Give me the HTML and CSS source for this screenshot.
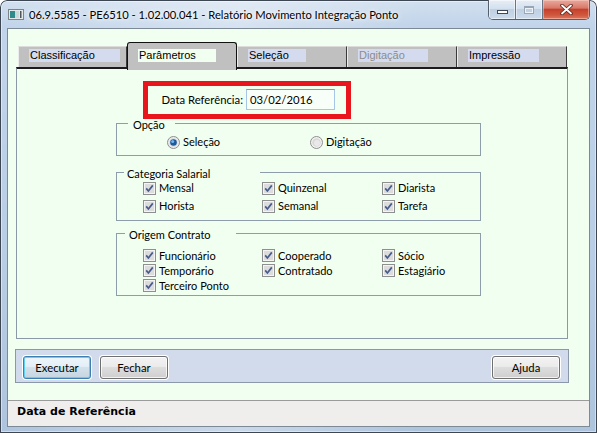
FILE: index.html
```html
<!DOCTYPE html>
<html lang="pt-BR">
<head>
<meta charset="utf-8">
<title>Relatório Movimento Integração Ponto</title>
<link rel="stylesheet" href="styles.css">
</head>
<body>
<div class="window">
  <div class="titlebar">
    <svg class="app-icon" width="16" height="11" viewBox="0 0 16 11"><rect x=".5" y=".5" width="15" height="10" fill="#e4e8ea" stroke="#7c8488"/><rect x="2" y="2" width="5" height="7" fill="#2f8a8c"/><rect x="7" y="2" width="4" height="7" fill="#c9d9da"/><rect x="12" y="2" width="1.5" height="7" fill="#4d5558"/></svg>
    <span class="title">06.9.5585 - PE6510 - 1.02.00.041 - Relatório Movimento Integração Ponto</span>
    <div class="caption">
      <span class="cbtn cbtn-min"><span class="min-glyph"></span></span>
      <span class="cbtn cbtn-max"><span class="max-glyph"></span></span>
      <span class="cbtn cbtn-close"><svg width="13" height="11" viewBox="0 0 13 11"><path d="M2 1.5l9 8M11 1.5l-9 8" stroke="#5a2a22" stroke-width="3.6" stroke-linecap="round"/><path d="M2 1.5l9 8M11 1.5l-9 8" stroke="#fff" stroke-width="1.8" stroke-linecap="round"/></svg></span>
    </div>
  </div>
  <div class="client">
    <div class="tabarea">
      <div class="tabs">
        <div class="tab tab-first"><span class="tab-label w-class">Classificação</span></div>
        <div class="tab tab-active"><span class="tab-label tab-label-active w-param">Parâmetros</span></div>
        <div class="tab"><span class="tab-label w-sel">Seleção</span></div>
        <div class="tab"><span class="tab-label tab-label-disabled w-dig">Digitação</span></div>
        <div class="tab"><span class="tab-label w-imp">Impressão</span></div>
      </div>
      <div class="panel">
        <div class="annot"></div>
        <div class="data-row">
          <span class="data-label">Data Referência:</span>
          <div class="input">03/02/2016</div>
        </div>

        <div class="group g-opcao">
          <div class="group-title t-opcao">Opção</div>
          <div class="radios">
            <span class="opt"><svg class="rd" width="13" height="13" viewBox="0 0 13 13"><circle cx="6.5" cy="6.5" r="6" fill="#ececec" stroke="#8e8f8f"/><circle cx="6.5" cy="6.5" r="4.2" fill="#d8dde2"/><circle cx="6.5" cy="6.5" r="3.3" fill="#1d5a9a"/><circle cx="5.7" cy="5.6" r="1.5" fill="#74b6ec"/></svg><span>Seleção</span></span>
            <span class="opt"><svg class="rd" width="13" height="13" viewBox="0 0 13 13"><circle cx="6.5" cy="6.5" r="6" fill="#f2f2f2" stroke="#8e8f8f"/><circle cx="6.5" cy="6.5" r="4.3" fill="#d9d9d9"/><circle cx="7" cy="7" r="3" fill="#e9e9e9"/></svg><span>Digitação</span></span>
          </div>
        </div>

        <div class="group g-cat">
          <div class="group-title t-cat">Categoria Salarial</div>
          <div class="checks">
            <span class="opt"><svg class="cb" width="13" height="13" viewBox="0 0 13 13"><rect x=".5" y=".5" width="12" height="12" fill="#f4f4f4" stroke="#8e8f8f"/><rect x="2" y="2" width="9" height="9" fill="#dcdcdc"/><path d="M3.2 6.4l2.2 2.6L9.8 3.4" fill="none" stroke="#475c8c" stroke-width="1.7"/></svg><span>Mensal</span></span>
            <span class="opt"><svg class="cb" width="13" height="13" viewBox="0 0 13 13"><rect x=".5" y=".5" width="12" height="12" fill="#f4f4f4" stroke="#8e8f8f"/><rect x="2" y="2" width="9" height="9" fill="#dcdcdc"/><path d="M3.2 6.4l2.2 2.6L9.8 3.4" fill="none" stroke="#475c8c" stroke-width="1.7"/></svg><span>Quinzenal</span></span>
            <span class="opt"><svg class="cb" width="13" height="13" viewBox="0 0 13 13"><rect x=".5" y=".5" width="12" height="12" fill="#f4f4f4" stroke="#8e8f8f"/><rect x="2" y="2" width="9" height="9" fill="#dcdcdc"/><path d="M3.2 6.4l2.2 2.6L9.8 3.4" fill="none" stroke="#475c8c" stroke-width="1.7"/></svg><span>Diarista</span></span>
            <span class="opt"><svg class="cb" width="13" height="13" viewBox="0 0 13 13"><rect x=".5" y=".5" width="12" height="12" fill="#f4f4f4" stroke="#8e8f8f"/><rect x="2" y="2" width="9" height="9" fill="#dcdcdc"/><path d="M3.2 6.4l2.2 2.6L9.8 3.4" fill="none" stroke="#475c8c" stroke-width="1.7"/></svg><span>Horista</span></span>
            <span class="opt"><svg class="cb" width="13" height="13" viewBox="0 0 13 13"><rect x=".5" y=".5" width="12" height="12" fill="#f4f4f4" stroke="#8e8f8f"/><rect x="2" y="2" width="9" height="9" fill="#dcdcdc"/><path d="M3.2 6.4l2.2 2.6L9.8 3.4" fill="none" stroke="#475c8c" stroke-width="1.7"/></svg><span>Semanal</span></span>
            <span class="opt"><svg class="cb" width="13" height="13" viewBox="0 0 13 13"><rect x=".5" y=".5" width="12" height="12" fill="#f4f4f4" stroke="#8e8f8f"/><rect x="2" y="2" width="9" height="9" fill="#dcdcdc"/><path d="M3.2 6.4l2.2 2.6L9.8 3.4" fill="none" stroke="#475c8c" stroke-width="1.7"/></svg><span>Tarefa</span></span>
          </div>
        </div>

        <div class="group g-org">
          <div class="group-title t-org">Origem Contrato</div>
          <div class="checks">
            <span class="opt"><svg class="cb" width="13" height="13" viewBox="0 0 13 13"><rect x=".5" y=".5" width="12" height="12" fill="#f4f4f4" stroke="#8e8f8f"/><rect x="2" y="2" width="9" height="9" fill="#dcdcdc"/><path d="M3.2 6.4l2.2 2.6L9.8 3.4" fill="none" stroke="#475c8c" stroke-width="1.7"/></svg><span>Funcionário</span></span>
            <span class="opt"><svg class="cb" width="13" height="13" viewBox="0 0 13 13"><rect x=".5" y=".5" width="12" height="12" fill="#f4f4f4" stroke="#8e8f8f"/><rect x="2" y="2" width="9" height="9" fill="#dcdcdc"/><path d="M3.2 6.4l2.2 2.6L9.8 3.4" fill="none" stroke="#475c8c" stroke-width="1.7"/></svg><span>Cooperado</span></span>
            <span class="opt"><svg class="cb" width="13" height="13" viewBox="0 0 13 13"><rect x=".5" y=".5" width="12" height="12" fill="#f4f4f4" stroke="#8e8f8f"/><rect x="2" y="2" width="9" height="9" fill="#dcdcdc"/><path d="M3.2 6.4l2.2 2.6L9.8 3.4" fill="none" stroke="#475c8c" stroke-width="1.7"/></svg><span>Sócio</span></span>
            <span class="opt"><svg class="cb" width="13" height="13" viewBox="0 0 13 13"><rect x=".5" y=".5" width="12" height="12" fill="#f4f4f4" stroke="#8e8f8f"/><rect x="2" y="2" width="9" height="9" fill="#dcdcdc"/><path d="M3.2 6.4l2.2 2.6L9.8 3.4" fill="none" stroke="#475c8c" stroke-width="1.7"/></svg><span>Temporário</span></span>
            <span class="opt"><svg class="cb" width="13" height="13" viewBox="0 0 13 13"><rect x=".5" y=".5" width="12" height="12" fill="#f4f4f4" stroke="#8e8f8f"/><rect x="2" y="2" width="9" height="9" fill="#dcdcdc"/><path d="M3.2 6.4l2.2 2.6L9.8 3.4" fill="none" stroke="#475c8c" stroke-width="1.7"/></svg><span>Contratado</span></span>
            <span class="opt"><svg class="cb" width="13" height="13" viewBox="0 0 13 13"><rect x=".5" y=".5" width="12" height="12" fill="#f4f4f4" stroke="#8e8f8f"/><rect x="2" y="2" width="9" height="9" fill="#dcdcdc"/><path d="M3.2 6.4l2.2 2.6L9.8 3.4" fill="none" stroke="#475c8c" stroke-width="1.7"/></svg><span>Estagiário</span></span>
            <span class="opt"><svg class="cb" width="13" height="13" viewBox="0 0 13 13"><rect x=".5" y=".5" width="12" height="12" fill="#f4f4f4" stroke="#8e8f8f"/><rect x="2" y="2" width="9" height="9" fill="#dcdcdc"/><path d="M3.2 6.4l2.2 2.6L9.8 3.4" fill="none" stroke="#475c8c" stroke-width="1.7"/></svg><span>Terceiro Ponto</span></span>
          </div>
        </div>
      </div>
    </div>

    <div class="buttonbar">
      <span class="btn btn-focus">Executar</span>
      <span class="btn">Fechar</span>
      <span class="btn btn-right">Ajuda</span>
    </div>
    <div class="spacer"></div>
    <div class="status">Data de Referência</div>
  </div>
</div>
</body>
</html>
```

FILE: styles.css
```css
* { box-sizing: border-box; }
html, body { margin: 0; padding: 0; }
body {
  width: 597px;
  height: 433px;
  overflow: hidden;
  background: #ffffff;
  font-family: Lato, "Liberation Sans", sans-serif;
  font-size: 11px;
  color: #000;
}

.window {
  width: 597px;
  height: 433px;
  display: flex;
  flex-direction: column;
  padding: 0 7px 6px 7px;
  border-radius: 7px 7px 0 0;
  background:
    linear-gradient(90deg, rgba(255,255,255,0) 0, rgba(255,255,255,0.35) 40%, rgba(255,255,255,0) 70%),
    linear-gradient(180deg, #d2e0ef 0, #c1d4ea 26px, #b9cde4 60%, #aec4dd 100%);
  box-shadow: inset 0 0 0 1px #3d4754, inset 0 0 0 2px rgba(255,255,255,0.45);
}

/* Title bar */
.titlebar {
  height: 28px;
  display: flex;
  align-items: flex-start;
  flex: none;
}
.app-icon { margin: 9px 0 0 1px; flex: none; }
.title {
  margin: 7px 0 0 5px;
  line-height: 16px;
  font-size: 11.2px;
  white-space: nowrap;
  text-shadow: 0 0 6px rgba(255,255,255,0.95), 0 0 3px rgba(255,255,255,0.9);
}
.caption {
  margin-left: auto;
  margin-right: 0;
  display: flex;
  height: 20px;
  border: 1px solid #56606d;
  border-top: none;
  border-radius: 0 0 5px 5px;
  overflow: hidden;
}
.cbtn {
  height: 19px;
  display: flex;
  align-items: center;
  justify-content: center;
}
.cbtn-min, .cbtn-max {
  width: 27px;
  border-right: 1px solid #6a7482;
  background: linear-gradient(180deg, #e7eef6 0, #d3e0ee 45%, #bfd0e4 50%, #ccdbec 100%);
  box-shadow: inset 0 0 0 1px rgba(255,255,255,0.5);
}
.cbtn-close {
  width: 46px;
  background: linear-gradient(180deg, #e9a99d 0, #d9796a 42%, #c5412c 50%, #d0583f 80%, #e07a5c 100%);
  box-shadow: inset 0 0 0 1px rgba(255,220,210,0.45);
}
.min-glyph {
  width: 11px;
  height: 4px;
  margin-top: 5px;
  background: #fff;
  border: 1px solid #3f4856;
}
.max-glyph {
  width: 10px;
  height: 8px;
  border: 1px solid #9aa6b5;
  border-top-width: 2px;
  box-shadow: inset 0 0 0 1px #eef3f8;
}

/* Client area */
.client {
  flex: 1;
  display: flex;
  flex-direction: column;
  background: #f0fff0;
  border: 1px solid #7d8995;
}

.tabarea {
  margin: 13px 0 0 8px;
  width: 552px;
}
.tabs {
  height: 25px;
  display: flex;
  align-items: flex-start;
  padding-left: 2px;
}
.tab {
  width: 110px;
  height: 21px;
  margin-top: 4px;
  background: #c0c0c0;
  border-left: 1px solid #ececec;
  border-top: 1px solid #dcdcdc;
  border-right: 1px solid #3a3a3a;
  padding: 2px 0 0 10px;
  flex: none;
}
.tab-first { width: 109px; }
.tab-active {
  position: relative;
  z-index: 1;
  height: 28px;
  margin-top: 0;
  border: 1px solid #111;
  border-bottom: none;
  border-radius: 3px 3px 0 0;
  padding: 6px 0 0 10px;
}
.tab-label {
  display: block;
  height: 13px;
  line-height: 13px;
  padding-left: 1px;
  background: #d4dbef;
  font-family: "Liberation Sans", Arial, sans-serif;
  font-size: 11px;
  color: #000;
  white-space: nowrap;
}
.tab-label-active { background: #f0fff0; }
.tab-label-disabled { color: #8c8c8c; }
.w-class { width: 91px; }
.w-param { width: 78px; }
.w-sel { width: 58px; }
.w-dig { width: 70px; }
.w-imp { width: 71px; }

.panel {
  position: relative;
  height: 272px;
  border: 1px solid #8b99a6;
  border-top: 2px solid #1c1c1c;
  padding-left: 99px;
  padding-top: 20px;
}

.annot {
  position: absolute;
  left: 126px;
  top: 12px;
  width: 208px;
  height: 38px;
  border: 5px solid #e8151c;
}

.data-row {
  display: flex;
  align-items: center;
  justify-content: flex-end;
  width: 219px;
  height: 21px;
}
.data-label {
  white-space: nowrap;
  margin-right: 3px;
  font-size: 11.3px;
}
.input {
  width: 89px;
  height: 21px;
  line-height: 19px;
  padding-left: 3px;
  font-size: 11.3px;
  background: #f8fff8;
  border: 1px solid #a7c5e6;
  border-top-color: #6f9dcf;
}

/* Group boxes */
.group {
  width: 365px;
  border: 1px solid #8d9dab;
}
.group-title {
  height: 10px;
  line-height: 10px;
  margin-top: -4px;
  background: #f0fff0;
  white-space: nowrap;
}
.t-opcao { width: 47px; margin-left: 11px; padding-left: 5px; }
.t-cat { width: 136px; margin-left: 7px; padding-left: 3px; }
.t-org { width: 111px; margin-left: 8px; padding-left: 4px; }

.g-opcao { margin-top: 13px; }
.g-cat { margin-top: 16px; }
.g-org { margin-top: 12px; }

.radios {
  display: grid;
  grid-template-columns: 143px auto;
  grid-auto-rows: 14px;
  padding: 5px 0 6px 50px;
}
.checks {
  display: grid;
  grid-template-columns: 119px 120px 1fr;
  padding-left: 26px;
}
.g-cat .checks { grid-auto-rows: 18px; padding-bottom: 5px; }
.g-org .checks { padding-top: 8px; grid-auto-rows: 15px; padding-bottom: 2px; }

.opt {
  display: flex;
  align-items: center;
  gap: 3px;
  white-space: nowrap;
  line-height: 14px;
}
.cb, .rd { flex: none; display: block; }

/* Buttons bar */
.buttonbar {
  margin: 10px 0 0 7px;
  width: 554px;
  height: 34px;
  flex: none;
  display: flex;
  align-items: flex-start;
  gap: 9px;
  padding: 6px 8px 0 7px;
  background: #d1dbec;
  border: 1px solid #8a98a9;
}
.btn {
  width: 68px;
  height: 23px;
  display: flex;
  align-items: center;
  justify-content: center;
  border: 1px solid #707070;
  border-radius: 3px;
  background: linear-gradient(180deg, #f3f3f3 0, #ebebeb 45%, #dddddd 50%, #cfcfcf 100%);
  box-shadow: 0 0 0 1px #ffffff, inset 0 0 0 1px rgba(255,255,255,0.75);
  font-size: 11.3px;
  white-space: nowrap;
}
.btn-focus {
  border-color: #3c7fb1;
  background: linear-gradient(180deg, #eef6fb 0, #e3eef6 45%, #d3e1ea 50%, #c6d6e1 100%);
  box-shadow: 0 0 0 1px #ffffff, inset 0 0 0 1px #5fd2f6;
}
.btn-right { margin-left: auto; }

.spacer { flex: 1; }

.status {
  height: 26px;
  flex: none;
  background: #f0eeec;
  border-top: 1px solid #9b9b9b;
  padding: 2px 0 0 9px;
  line-height: 17px;
  font-family: "DejaVu Sans", Verdana, sans-serif;
  font-weight: bold;
  font-size: 11px;
}
```
